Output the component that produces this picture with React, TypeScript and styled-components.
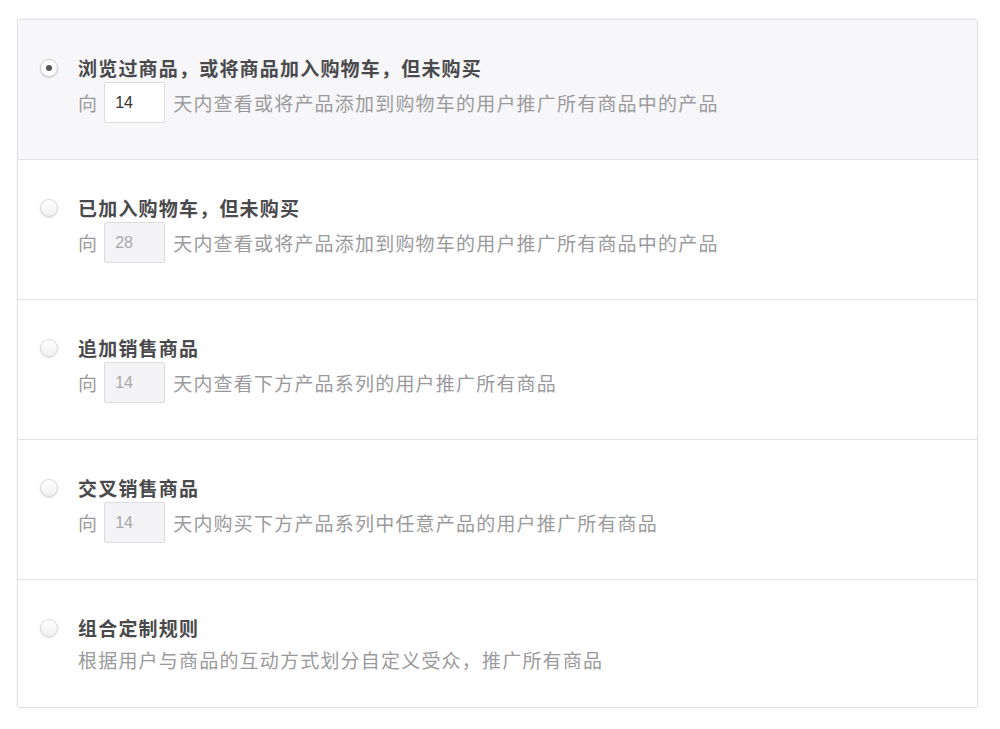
import React, { useState } from "react";
import styled, { createGlobalStyle } from "styled-components";

const GlobalStyle = createGlobalStyle`
  body {
    margin: 0;
    background: #ffffff;
    font-family: "Noto Sans CJK SC", "Noto Sans", sans-serif;
  }
`;

const Page = styled.div`
  padding: 19px 22px 20px 17px;
`;

const Card = styled.div`
  border: 1px solid #e1e1e3;
  border-radius: 3px;
  box-shadow: 0 0 3px rgba(0, 0, 0, 0.06);
  overflow: hidden;
  background: #ffffff;
`;

const Row = styled.label<{ $active: boolean }>`
  display: flex;
  align-items: flex-start;
  padding: 38px 22px 36px 22px;
  background: ${(p) => (p.$active ? "#f7f7f9" : "#ffffff")};
  border-bottom: 1px solid #e3e3e5;
  cursor: pointer;

  &:last-child {
    border-bottom: none;
    padding-bottom: 37px;
  }
`;

const Radio = styled.span<{ $checked: boolean }>`
  flex: none;
  width: 18px;
  height: 18px;
  margin-top: 1px;
  margin-right: 20px;
  border-radius: 50%;
  border: 1px solid ${(p) => (p.$checked ? "#cfcfd2" : "#d8d8db")};
  background: ${(p) =>
    p.$checked ? "#ffffff" : "linear-gradient(#ffffff, #f1f1f3)"};
  box-shadow: 0 1px 2px rgba(0, 0, 0, 0.14);
  box-sizing: border-box;
  display: flex;
  align-items: center;
  justify-content: center;

  &::after {
    content: "";
    display: ${(p) => (p.$checked ? "block" : "none")};
    width: 6px;
    height: 6px;
    border-radius: 50%;
    background: #555558;
  }
`;

const Body = styled.div`
  display: flex;
  flex-direction: column;
`;

const Title = styled.div`
  font-size: 19px;
  line-height: 20px;
  letter-spacing: 1.2px;
  font-weight: 700;
  color: #4a4a4c;
`;

const Desc = styled.div<{ $plain: boolean }>`
  display: flex;
  align-items: center;
  margin-top: ${(p) => (p.$plain ? "12px" : "4px")};
  font-size: 19px;
  line-height: 20px;
  letter-spacing: 1.2px;
  color: #9a9a9c;
`;

const DaysInput = styled.input`
  width: 61px;
  height: 41px;
  box-sizing: border-box;
  margin: 0 8px 0 6px;
  padding: 0 0 0 10px;
  border: 1px solid #dcdcde;
  border-radius: 2px;
  font-family: "Liberation Sans", Arial, sans-serif;
  font-size: 16px;
  color: #333333;
  background: #ffffff;
  outline: none;

  &:disabled {
    background: #f4f4f6;
    color: #a8a8aa;
  }
`;

type Rule = {
  title: string;
  days?: string;
  text: string;
};

const rules: Rule[] = [
  {
    title: "浏览过商品，或将商品加入购物车，但未购买",
    days: "14",
    text: "天内查看或将产品添加到购物车的用户推广所有商品中的产品",
  },
  {
    title: "已加入购物车，但未购买",
    days: "28",
    text: "天内查看或将产品添加到购物车的用户推广所有商品中的产品",
  },
  {
    title: "追加销售商品",
    days: "14",
    text: "天内查看下方产品系列的用户推广所有商品",
  },
  {
    title: "交叉销售商品",
    days: "14",
    text: "天内购买下方产品系列中任意产品的用户推广所有商品",
  },
  {
    title: "组合定制规则",
    text: "根据用户与商品的互动方式划分自定义受众，推广所有商品",
  },
];

const App: React.FC = () => {
  const [selected, setSelected] = useState(0);
  const [days, setDays] = useState(rules.map((r) => r.days || ""));

  return (
    <Page>
      <GlobalStyle />
      <Card>
        {rules.map((rule, i) => (
          <Row key={i} $active={selected === i} onClick={() => setSelected(i)}>
            <Radio $checked={selected === i} />
            <Body>
              <Title>{rule.title}</Title>
              {rule.days ? (
                <Desc $plain={false}>
                  向
                  <DaysInput
                    value={days[i]}
                    disabled={selected !== i}
                    onChange={(e) => {
                      const next = [...days];
                      next[i] = e.target.value;
                      setDays(next);
                    }}
                  />
                  {rule.text}
                </Desc>
              ) : (
                <Desc $plain>{rule.text}</Desc>
              )}
            </Body>
          </Row>
        ))}
      </Card>
    </Page>
  );
};

export default App;
